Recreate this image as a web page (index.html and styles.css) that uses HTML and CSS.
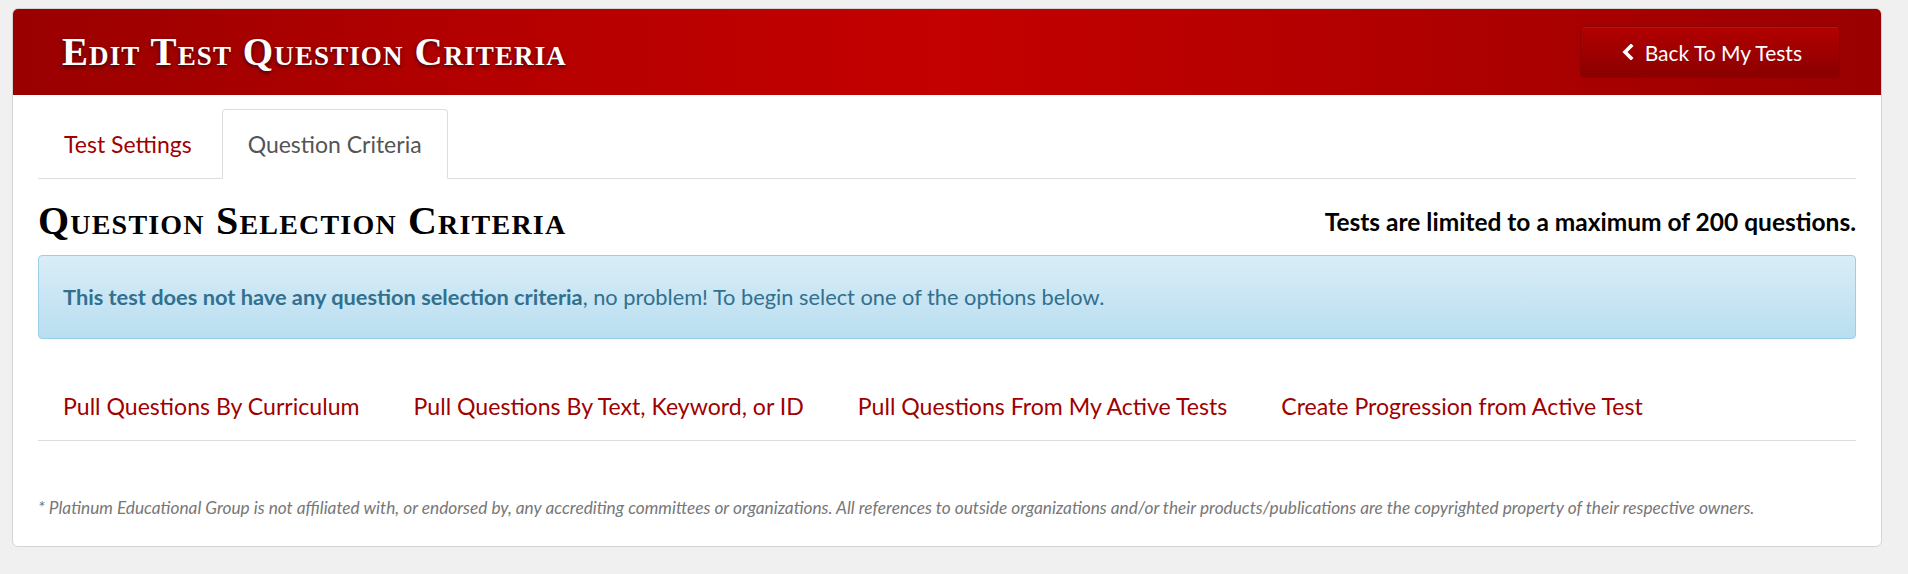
FILE: index.html
```html
<!DOCTYPE html>
<html lang="en">
<head>
<meta charset="utf-8">
<title>Edit Test Question Criteria</title>
<link rel="stylesheet" href="styles.css">
</head>
<body>
<div class="card">
  <header class="card-head">
    <h1 class="title">Edit Test Question Criteria</h1>
    <a class="btn-back" href="#">
      <svg class="chev" viewBox="0 0 13 16" aria-hidden="true"><polyline points="10,2 4,8 10,14" fill="none" stroke="#fff" stroke-width="3.6" stroke-linecap="square" stroke-linejoin="miter"/></svg>
      <span>Back To My Tests</span>
    </a>
  </header>
  <div class="card-body">
    <ul class="tabs">
      <li class="tab"><a href="#">Test Settings</a></li>
      <li class="tab active"><a href="#">Question Criteria</a></li>
    </ul>
    <div class="section-head">
      <h2 class="section-title">Question Selection Criteria</h2>
      <p class="limit">Tests are limited to a maximum of 200 questions.</p>
    </div>
    <div class="alert"><strong>This test does not have any question selection criteria</strong>, no problem! To begin select one of the options below.</div>
    <ul class="options">
      <li><a href="#">Pull Questions By Curriculum</a></li>
      <li><a href="#">Pull Questions By Text, Keyword, or ID</a></li>
      <li><a href="#">Pull Questions From My Active Tests</a></li>
      <li><a href="#">Create Progression from Active Test</a></li>
    </ul>
    <p class="disclaimer">* Platinum Educational Group is not affiliated with, or endorsed by, any accrediting committees or organizations. All references to outside organizations and/or their products/publications are the copyrighted property of their respective owners.</p>
  </div>
</div>
</body>
</html>
```

FILE: styles.css
```css
* { box-sizing: border-box; }
html, body { margin: 0; padding: 0; }
body {
  background: #f0f0f0;
  font-family: "Lato", "Liberation Sans", sans-serif;
  padding: 8px 26px 28px 12px;
}
a { text-decoration: none; }
.card {
  background: #fff;
  border: 1px solid #d4d4d4;
  border-radius: 6px;
  overflow: hidden;
}
.card-head {
  height: 86px;
  display: flex;
  align-items: center;
  justify-content: space-between;
  padding: 0 41px 0 49px;
  background: linear-gradient(to right, #9a0000 0%, #b40000 25%, #c40000 50%, #b00000 75%, #9a0000 100%);
}
.title {
  margin: 0;
  font-family: "Liberation Serif", "DejaVu Serif", serif;
  font-variant: small-caps;
  font-weight: bold;
  font-size: 39px;
  letter-spacing: 1.1px;
  line-height: 44px;
  color: #fff;
  text-shadow: 0 2px 4px rgba(0,0,0,0.6);
}
.btn-back {
  height: 52px;
  display: flex;
  align-items: center;
  gap: 11px;
  padding: 0 37px 0 40px;
  border: 1px solid #8c0000;
  border-radius: 4px;
  background: linear-gradient(to bottom, #b30000 0%, #8a0000 100%);
  color: #fff;
  font-size: 21px;
  box-shadow: inset 0 1px 0 rgba(255,255,255,0.08);
}
.chev { width: 13px; height: 16px; }
.card-body { padding: 14px 25px 28px; }
.tabs {
  list-style: none;
  margin: 0;
  padding: 0;
  display: flex;
  border-bottom: 1px solid #ddd;
}
.tab { margin-right: 4px; margin-bottom: -1px; }
.tab a {
  display: block;
  padding: 21px 25px;
  line-height: 26px;
  font-size: 23px;
  color: #a00000;
  border: 1px solid transparent;
  border-radius: 4px 4px 0 0;
}
.tab.active a {
  color: #555;
  background: #fff;
  border-color: #ddd;
  border-bottom-color: #fff;
}
.section-head {
  display: flex;
  align-items: center;
  justify-content: space-between;
  padding-top: 20px;
  margin-bottom: 12px;
}
.section-title {
  margin: 0;
  font-family: "Liberation Serif", "DejaVu Serif", serif;
  font-variant: small-caps;
  font-weight: bold;
  font-size: 40px;
  letter-spacing: 1.2px;
  line-height: 44px;
  color: #000;
}
.limit {
  margin: 0;
  font-weight: bold;
  font-size: 24.5px;
  color: #000;
}
.alert {
  padding: 29px 24px;
  line-height: 24px;
  font-size: 21.8px;
  color: #31708f;
  border: 1px solid #9acfea;
  border-radius: 4px;
  background: linear-gradient(to bottom, #d9edf7 0%, #b9def0 100%);
}
.options {
  list-style: none;
  margin: 0;
  padding: 54px 0 21px;
  display: flex;
  gap: 4px;
  border-bottom: 1px solid #ddd;
}
.options a {
  display: block;
  padding: 0 25px;
  line-height: 26px;
  font-size: 23.1px;
  color: #a00000;
}
.disclaimer {
  margin: 57px 0 0;
  font-style: italic;
  font-size: 17.25px;
  line-height: 20px;
  color: #777;
}
```
